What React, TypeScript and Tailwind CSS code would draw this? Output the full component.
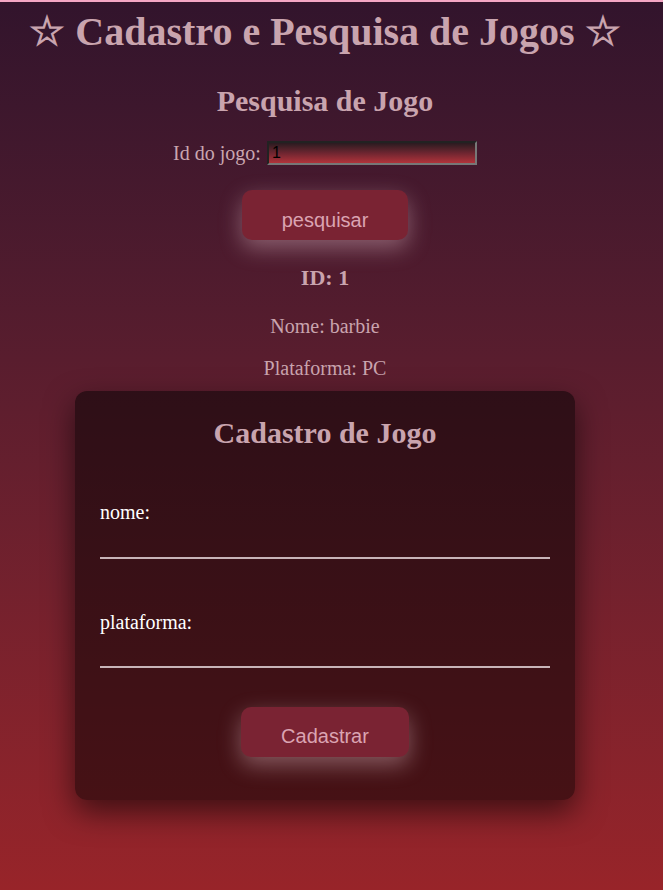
import { useState } from "react";

// Cadastro e Pesquisa de Jogos — single page, two blocks

const serif = "font-['Liberation_Serif','Times_New_Roman',serif]";
const sans = "font-['Liberation_Sans',Arial,sans-serif]";

export default function App() {
  const [id, setId] = useState("1");
  const [nome, setNome] = useState("");
  const [plataforma, setPlataforma] = useState("");

  return (
    <div
      className={`min-h-screen border-t-2 border-[#f4a6c4] bg-gradient-to-b from-[#32142c] to-[#982429] ${serif}`}
    >
      <div className="w-[650px] flex flex-col items-center pb-10">
        <h1 className="h-[60px] flex items-center text-[40px] font-bold text-[#c9a4ae] whitespace-nowrap">
          ☆ Cadastro e Pesquisa de Jogos ☆
        </h1>

        {/* Pesquisa */}
        <h2 className="mt-[22px] h-[34px] leading-[34px] text-[30px] font-bold text-[#c9a4ae]">
          Pesquisa de Jogo
        </h2>

        <div className="mt-[23px] h-[24px] flex items-center gap-[6px] text-[20px] text-[#caa6b0]">
          <label htmlFor="idJogo">Id do jogo:</label>
          <input
            id="idJogo"
            value={id}
            onChange={(e) => setId(e.target.value)}
            className={`w-[210px] h-[24px] px-[3px] text-[16px] text-black bg-gradient-to-b from-[#2a1a20] via-[#6e2530] to-[#b2333a] border-2 border-t-[#222] border-l-[#222] border-r-[#777] border-b-[#777] outline-none ${sans}`}
          />
        </div>

        <button
          className={`mt-[25px] w-[166px] h-[50px] pt-[10px] rounded-[10px] bg-[#7a2333] text-[20px] text-[#dba4b2] shadow-[0_8px_22px_rgba(255,220,230,0.35)] ${sans}`}
        >
          pesquisar
        </button>

        <p className="mt-[26px] h-[24px] leading-[24px] text-[22px] font-bold text-[#c9a4ae]">
          ID: 1
        </p>
        <p className="mt-[25px] h-[22px] leading-[22px] text-[20px] text-[#c9a4ae]">
          Nome: barbie
        </p>
        <p className="mt-[20px] h-[22px] leading-[22px] text-[20px] text-[#c9a4ae]">
          Plataforma: PC
        </p>

        {/* Cadastro */}
        <div className="mt-[12px] w-[500px] rounded-[12px] bg-black/50 px-[25px] pt-[24px] pb-[43px] flex flex-col shadow-[0_12px_30px_rgba(0,0,0,0.55)]">
          <h2 className="h-[36px] leading-[36px] text-center text-[30px] font-bold text-[#c9a4ae]">
            Cadastro de Jogo
          </h2>

          <label htmlFor="nome" className="mt-[50px] h-[22px] leading-[22px] text-[20px] text-white">
            nome:
          </label>
          <input
            id="nome"
            value={nome}
            onChange={(e) => setNome(e.target.value)}
            className="h-[36px] w-[450px] bg-transparent border-b-2 border-[#c8b4b8] outline-none text-white text-[16px]"
          />

          <label htmlFor="plataforma" className="mt-[52px] h-[22px] leading-[22px] text-[20px] text-white">
            plataforma:
          </label>
          <input
            id="plataforma"
            value={plataforma}
            onChange={(e) => setPlataforma(e.target.value)}
            className="h-[35px] w-[450px] bg-transparent border-b-2 border-[#c8b4b8] outline-none text-white text-[16px]"
          />

          <button
            className={`mt-[39px] self-center w-[168px] h-[50px] pt-[8px] rounded-[10px] bg-[#7a2333] text-[20px] text-[#dba4b2] shadow-[0_8px_22px_rgba(255,220,230,0.35)] ${sans}`}
          >
            Cadastrar
          </button>
        </div>
      </div>
    </div>
  );
}
